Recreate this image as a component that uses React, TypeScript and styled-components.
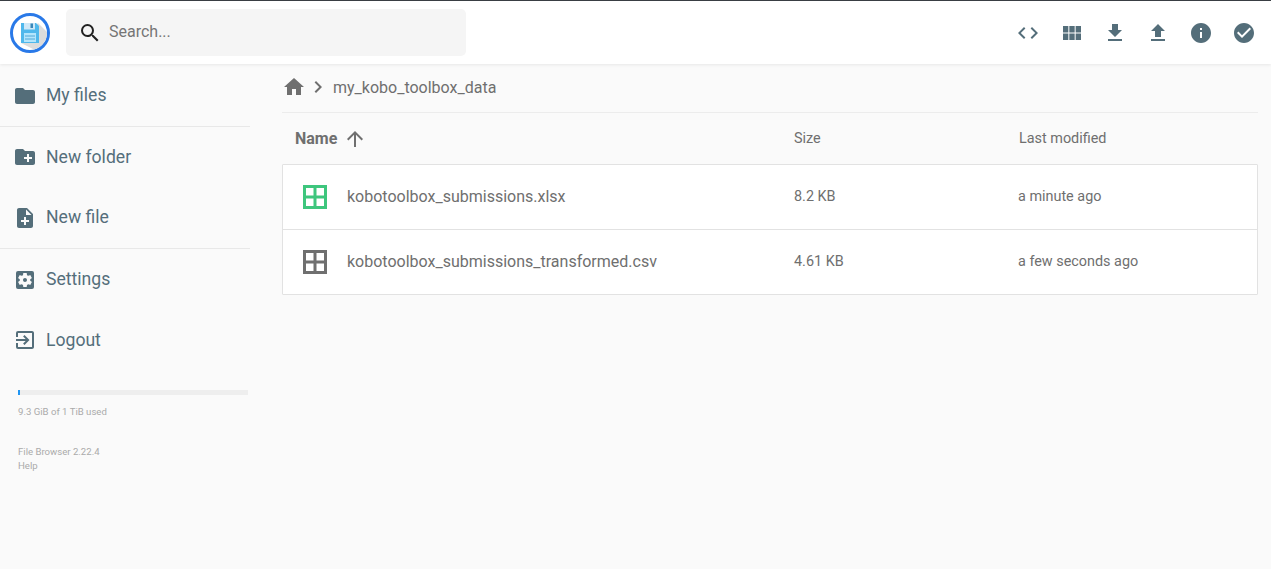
import React from "react";
import styled, { createGlobalStyle } from "styled-components";
import {
  MdSearch, MdCode, MdViewModule, MdFileDownload, MdFileUpload, MdInfo, MdCheckCircle,
  MdFolder, MdCreateNewFolder, MdNoteAdd, MdSettingsApplications, MdExitToApp,
  MdHome, MdChevronRight, MdArrowUpward,
} from "react-icons/md";

const Global = createGlobalStyle`
  html, body { margin: 0; padding: 0; height: 100%; }
  body { background: #fafafa; font-family: Roboto, "Liberation Sans", sans-serif; overflow: hidden; }
  * { box-sizing: border-box; }
`;

const Page = styled.div`
  height: 569px;
  display: flex;
  flex-direction: column;
  border-top: 1px solid #3a3f44;
`;

const TopBar = styled.header`
  height: 63px;
  flex: none;
  background: #fff;
  display: flex;
  align-items: center;
  padding: 0 5px 0 10px;
  box-shadow: 0 1px 3px rgba(0, 0, 0, 0.08);
  position: relative;
  z-index: 1;
`;

const LogoMark = styled.svg`
  width: 40px;
  height: 40px;
  flex: none;
`;

const SearchBox = styled.div`
  width: 400px;
  height: 47px;
  margin: 0 0 0 16px;
  background: #f5f5f5;
  border-radius: 5px;
  display: flex;
  align-items: center;
  gap: 7px;
  padding-left: 12px;
  color: #212121;
  font-size: 16px;
  & > span { color: #757575; padding-bottom: 2px; }
`;

const Actions = styled.div`
  margin-left: auto;
  display: flex;
`;

const ActionButton = styled.div`
  width: 43.2px;
  height: 43px;
  display: flex;
  align-items: center;
  justify-content: center;
  color: #546e7a;
`;

const Body = styled.div`
  flex: 1;
  display: flex;
  min-height: 0;
`;

const Sidebar = styled.nav`
  width: 250px;
  flex: none;
  margin-right: 32px;
  padding-top: 1px;
`;

const NavItem = styled.div<{ $h: number }>`
  height: ${(p) => p.$h}px;
  display: flex;
  align-items: center;
  gap: 9.5px;
  padding-left: 12.5px;
  color: #546e7a;
  font-size: 17.6px;
`;

const NavLabel = styled.span`
  padding-bottom: 1px;
`;

const NavRule = styled.hr`
  margin: 0;
  border: 0;
  height: 1px;
  background: #e8e8e8;
`;

const Quota = styled.div`
  margin: 20px 0 0 18px;
  width: 230px;
`;

const QuotaTrack = styled.div`
  height: 5px;
  background: #eeeeee;
`;

const QuotaFill = styled.div`
  height: 100%;
  background: #2196f3;
`;

const SmallText = styled.p<{ $top: number }>`
  margin: ${(p) => p.$top}px 0 0 18px;
  color: #aaaaaa;
  font-size: 9.6px;
  line-height: 14px;
`;

const Main = styled.main`
  width: 976px;
  flex: none;
`;

const Crumbs = styled.div`
  height: 49px;
  display: flex;
  align-items: center;
  color: #6f6f6f;
  font-size: 16px;
  border-bottom: 1px solid #ececec;
  padding-bottom: 2px;
  & > span { margin-left: 3px; }
`;

const columns = `grid-template-columns: 512px 224px 1fr;`;

const HeadRow = styled.div`
  ${columns}
  display: grid;
  align-items: center;
  height: 51px;
  color: #6f6f6f;
  font-size: 14.4px;
`;

const NameHead = styled.div`
  display: flex;
  align-items: center;
  gap: 6px;
  padding-left: 13px;
  font-size: 16px;
  font-weight: 700;
`;

const ModifiedHead = styled.div`
  padding-left: 1px;
`;

const FileList = styled.div`
  background: #fff;
  border: 1px solid #e2e2e2;
  border-radius: 1px;
`;

const FileRow = styled.div`
  ${columns}
  display: grid;
  align-items: center;
  height: 64px;
  margin-left: -1px;
  color: #6f6f6f;
  font-size: 14.4px;
  & + & { border-top: 1px solid #e2e2e2; height: 65px; }
`;

const FileName = styled.div`
  display: flex;
  align-items: center;
  gap: 20px;
  padding-left: 21px;
  font-size: 16px;
`;

const CellText = styled.div`
  padding-bottom: 2px;
`;

const GridIcon = styled.svg<{ $color: string }>`
  width: 24px;
  height: 24px;
  flex: none;
  color: ${(p) => p.$color};
`;

const TableGlyph = ({ color }: { color: string }) => (
  <GridIcon $color={color} viewBox="0 0 24 24" fill="none" stroke="currentColor" strokeWidth="3">
    <path d="M1.5 1.5h21v21h-21zM12 1.5v21M1.5 12h21" />
  </GridIcon>
);

const Logo = () => (
  <LogoMark viewBox="0 0 40 40">
    <circle cx="20" cy="20" r="18.5" fill="#fff" stroke="#2979e8" strokeWidth="3" />
    <path d="M28 10 L37 19 A17 17 0 0 1 24 36.500 L11 30Z" fill="#dcdcdc" />
    <path d="M11 10h15l3 3V30H11z" fill="#4fb8ec" />
    <rect x="14" y="10" width="11" height="6.500" fill="#cfe8f7" />
    <rect x="20.500" y="10.500" width="2.500" height="4.500" fill="#3a86b8" />
    <rect x="14" y="20" width="12" height="9" fill="#b3e5fc" />
    <path d="M15 23h10M15 26h10" stroke="#4fa8d8" strokeWidth="1" />
  </LogoMark>
);

const actionIcons = [MdCode, MdViewModule, MdFileDownload, MdFileUpload, MdInfo, MdCheckCircle];

const files = [
  { name: "kobotoolbox_submissions.xlsx", size: "8.2 KB", when: "a minute ago", color: "#3ec67d" },
  { name: "kobotoolbox_submissions_transformed.csv", size: "4.61 KB", when: "a few seconds ago", color: "#6f6f6f" },
];

export default function App() {
  return (
    <Page>
      <Global />
      <TopBar>
        <Logo />
        <SearchBox>
          <MdSearch size={24} />
          <span>Search...</span>
        </SearchBox>
        <Actions>
          {actionIcons.map((Icon, i) => (
            <ActionButton key={i}>
              <Icon size={24} />
            </ActionButton>
          ))}
        </Actions>
      </TopBar>
      <Body>
        <Sidebar>
          <NavItem $h={61}><MdFolder size={24} /><NavLabel>My files</NavLabel></NavItem>
          <NavRule />
          <NavItem $h={60}><MdCreateNewFolder size={24} /><NavLabel>New folder</NavLabel></NavItem>
          <NavItem $h={61}><MdNoteAdd size={24} /><NavLabel>New file</NavLabel></NavItem>
          <NavRule />
          <NavItem $h={61}><MdSettingsApplications size={24} /><NavLabel>Settings</NavLabel></NavItem>
          <NavItem $h={60}><MdExitToApp size={24} /><NavLabel>Logout</NavLabel></NavItem>
          <Quota>
            <QuotaTrack>
              <QuotaFill style={{ width: "1%" }} />
            </QuotaTrack>
          </Quota>
          <SmallText $top={10}>9.3 GiB of 1 TiB used</SmallText>
          <SmallText $top={26}>File Browser 2.22.4<br />Help</SmallText>
        </Sidebar>
        <Main>
          <Crumbs>
            <MdHome size={24} />
            <MdChevronRight size={24} />
            <span>my_kobo_toolbox_data</span>
          </Crumbs>
          <HeadRow>
            <NameHead>Name <MdArrowUpward size={24} /></NameHead>
            <div>Size</div>
            <ModifiedHead>Last modified</ModifiedHead>
          </HeadRow>
          <FileList>
            {files.map((f) => (
              <FileRow key={f.name}>
                <FileName>
                  <TableGlyph color={f.color} />
                  <CellText>{f.name}</CellText>
                </FileName>
                <CellText>{f.size}</CellText>
                <CellText>{f.when}</CellText>
              </FileRow>
            ))}
          </FileList>
        </Main>
      </Body>
    </Page>
  );
}
